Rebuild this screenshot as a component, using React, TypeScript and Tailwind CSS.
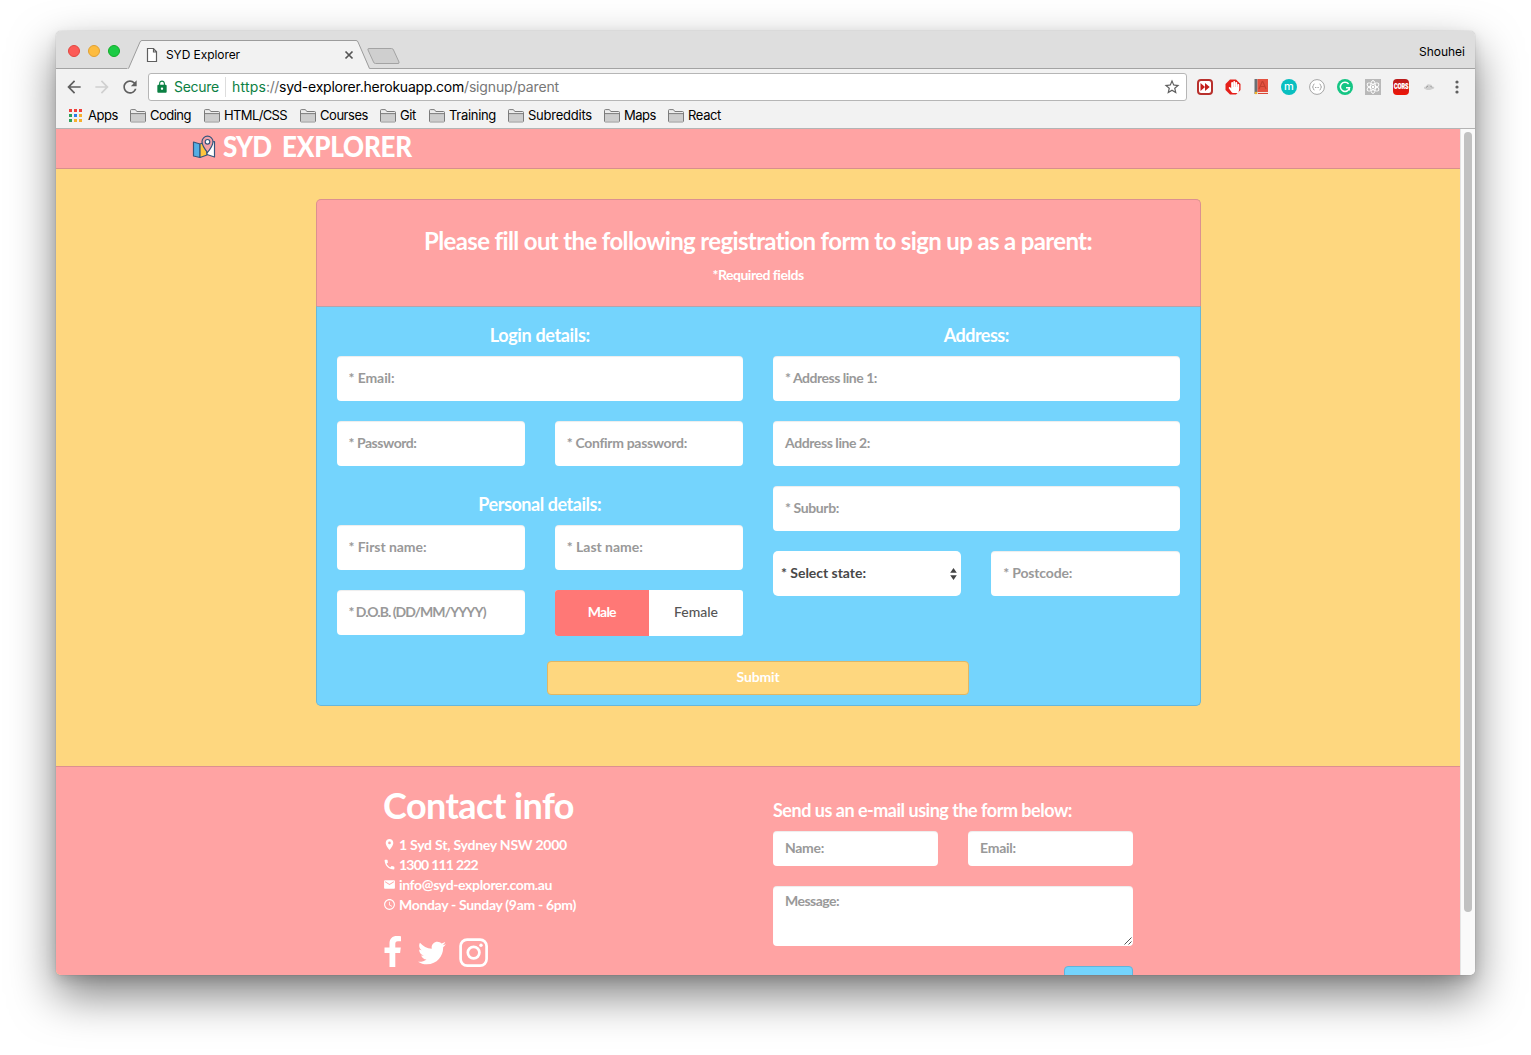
import React, { useLayoutEffect, useRef } from 'react';
import { FaTwitter, FaHandPaper } from 'react-icons/fa';
import { MdEmail, MdLocationOn, MdPhone, MdAccessTime, MdLock, MdArrowBack, MdArrowForward, MdRefresh, MdStarBorder } from 'react-icons/md';

/** Text tracked so that it spans a given number of pixels. */
function Fit({ w, children, className = '' }: { w: number; children: string; className?: string }) {
  const ref = useRef<HTMLSpanElement>(null);
  useLayoutEffect(() => {
    const el = ref.current;
    if (!el) return;
    el.style.letterSpacing = '0px';
    const natural = el.getBoundingClientRect().width;
    el.style.letterSpacing = `${(w - natural) / children.length}px`;
  }, [w, children]);
  return (
    <span ref={ref} className={`inline-block whitespace-pre ${className}`}>
      {children}
    </span>
  );
}

function Field({ label, w, className = 'h-[45px]' }: { label: string; w: number; className?: string }) {
  return (
    <div className={`flex min-w-0 items-center rounded bg-white px-3 pb-0.5 text-sm font-bold text-[#999] shadow-[inset_0_1px_1px_rgba(0,0,0,0.075)] ${className}`}>
      <Fit w={w}>{label}</Fit>
    </div>
  );
}

function Heading({ w, children }: { w: number; children: string }) {
  return (
    <h4 className="h-5 text-center text-lg leading-5 font-bold">
      <Fit w={w}>{children}</Fit>
    </h4>
  );
}

function Folder() {
  return (
    <svg width="16" height="14" viewBox="0 0 16 14" className="shrink-0">
      <path d="M.5 12V1.500q0-.9.9-.9h4l1.400 1.900h7.700q1 0 1 1V12q0 .9-.9.9H1.400q-.9 0-.9-.9Z" fill="#ececec" stroke="#7b7b7b" />
      <path d="M1 5.100h14V12.400H1Z" fill="#cdcdcd" />
      <path d="M.5 4.600h15" stroke="#7b7b7b" />
    </svg>
  );
}

const bookmarks: [string, number, string][] = [
  ['Coding', 41, 'w-[74px]'],
  ['HTML/CSS', 63, 'w-24'],
  ['Courses', 48, 'w-20'],
  ['Git', 16, 'w-[49px]'],
  ['Training', 47, 'w-[79px]'],
  ['Subreddits', 64, 'w-24'],
  ['Maps', 32, 'w-16'],
  ['React', 33, 'w-16'],
];

const appColours = ['bg-[#f0403a]', 'bg-[#f0403a]', 'bg-[#f0403a]', 'bg-[#2da05a]', 'bg-[#2b7de9]', 'bg-[#f6b02c]', 'bg-[#2da05a]', 'bg-[#f6b02c]', 'bg-[#f6b02c]'];

function TabStrip() {
  return (
    <div className="relative flex h-[38px] border-b border-[#a3a3a3] bg-[#dedede]">
      <div className="flex gap-2 pt-[14px] pl-3">
        <i className="size-3 rounded-full border border-[#e2463f] bg-[#fc5b57]" />
        <i className="size-3 rounded-full border border-[#e1a032] bg-[#fdbc40]" />
        <i className="size-3 rounded-full border border-[#12ac28] bg-[#1ccb45]" />
      </div>
      <div className="absolute top-[9px] left-[71px] h-[29px] w-[280px]">
        <svg width="280" height="29" viewBox="0 0 280 29" className="absolute inset-0">
          <path d="M0 28.500h1.500L13 2Q13.700.5 15 .5H229Q230.500.5 231 2L242 28.500H280V29H0Z" fill="#f2f2f2" />
          <path d="M1.500 28.500 13 2Q13.700.5 15 .5H229Q230.500.5 231 2L242.500 28.500" fill="none" stroke="#9c9c9c" />
          <path d="M242.800 28.500H280" stroke="#a3a3a3" />
          <path d="M242 8.500H264.500Q266 8.500 266.500 10L272 22Q272.500 23.500 271 23.500H248.500Q247 23.500 246.500 22L241 10Q240.400 8.500 242 8.500Z" fill="#cfcfcf" stroke="#a3a3a3" />
          <path d="M20.500 8.500H26.500L29.500 11.800V21.500H20.500ZM26.500 8.500V12H29.500" fill="#fff" stroke="#5f5f5f" strokeWidth="1.200" />
          <path d="m218.500 11.500 7 7m0-7-7 7" stroke="#555" strokeWidth="1.700" />
        </svg>
        <div className="relative flex h-full items-center pl-[39px] text-xs text-black">
          <Fit w={74}>SYD Explorer</Fit>
        </div>
      </div>
      <span className="mt-[13px] mr-[10px] ml-auto text-xs leading-4 text-black">
        <Fit w={46}>Shouhei</Fit>
      </span>
    </div>
  );
}

function Extensions() {
  return (
    <div className="ml-[10px] flex items-center gap-3">
      <svg width="16" height="16" viewBox="0 0 16 16">
        <rect x="1" y="1" width="14" height="14" rx="3" fill="#fff" stroke="#b8302c" strokeWidth="2" />
        <path d="M3.500 4 8 8l-4.500 4ZM8 4 12.700 8 8 12Z" fill="#c4201d" />
      </svg>
      <div className="relative size-4">
        <svg width="16" height="16" viewBox="0 0 16 16">
          <path d="M5 .5h6L15.500 5v6L11 15.500H5L.5 11V5Z" fill="#e5201b" />
        </svg>
        <FaHandPaper className="absolute top-[2px] left-[3px] size-[12px] text-white" />
      </div>
      <svg width="16" height="16" viewBox="0 0 16 16">
        <path d="M1.500 0h3v15h-3Z" fill="#6b7074" />
        <path d="M4.500 0H15v13H4.500Z" fill="#e4513f" />
        <path d="M4.500 13H15v2H3Z" fill="#f4e6df" />
        <path d="M6 10 9.200 2.500h.6L13 10M7.500 7.500h4" fill="none" stroke="#c4402f" strokeWidth="1.200" />
        <path d="M5 14.500h10" stroke="#d94636" />
        <circle cx="3" cy="14" r="1.300" fill="#f0b429" />
      </svg>
      <span className="flex size-4 items-center justify-center rounded-full bg-[#09bfc0] pb-px text-[11px] leading-none font-medium text-white">m</span>
      <svg width="16" height="16" viewBox="0 0 16 16" fill="none" stroke="#a5a5a5">
        <circle cx="8" cy="8" r="7.400" fill="#fff" />
        <path d="M5.500 5Q4.300 5 4.300 6.500T3.300 8Q4.300 8 4.300 9.500T5.500 11M10.500 5Q11.700 5 11.700 6.500T12.700 8Q11.700 8 11.700 9.500T10.500 11M6 8.500h1M7.600 8.500h1M9.200 8.500h.8" />
      </svg>
      <svg width="16" height="16" viewBox="0 0 16 16">
        <circle cx="8" cy="8" r="8" fill="#15c584" />
        <path d="M11.600 5A4.600 4.600 0 1 0 12.500 8.800H9M12.300 8.800v2.800" fill="none" stroke="#fff" strokeWidth="1.500" />
      </svg>
      <svg width="16" height="16" viewBox="0 0 16 16">
        <path d="M0 0h16v16H0Z" fill="#b9b9b9" />
        <g fill="none" stroke="#fff">
          <ellipse cx="8" cy="8" rx="6.500" ry="2.500" transform="rotate(30 8 8)" />
          <ellipse cx="8" cy="8" rx="6.500" ry="2.500" transform="rotate(90 8 8)" />
          <ellipse cx="8" cy="8" rx="6.500" ry="2.500" transform="rotate(150 8 8)" />
        </g>
        <circle cx="8" cy="8" r="1.300" fill="#fff" />
      </svg>
      <span className="flex size-4 items-center justify-center rounded-sm bg-linear-to-b from-[#b91c1c] to-[#ee1505] text-white">
        <span className="scale-y-140 text-[5.5px] leading-none font-black tracking-[-0.3px]">CORS</span>
      </span>
      <svg width="16" height="16" viewBox="0 0 16 16">
        <path d="M3 9.500Q2.500 7.500 5 7.500 6 4.500 8.500 5.500 11 5 11.200 7.500 14 7.500 13 9.500L9 11H6Z" fill="#cfcfcf" />
        <path d="M5 8.500 7 7M9.500 7l1.500 1.500" stroke="#999" />
      </svg>
      <svg width="16" height="16" viewBox="0 0 16 16" fill="#5f5f5f">
        <circle cx="8" cy="3" r="1.600" />
        <circle cx="8" cy="8" r="1.600" />
        <circle cx="8" cy="13" r="1.600" />
      </svg>
    </div>
  );
}

function Toolbar() {
  return (
    <div className="h-[60px] border-b border-[#b4b4b4] bg-[#f2f2f2] text-black">
      <div className="flex h-9 items-center pl-2">
        <MdArrowBack className="size-5 text-[#5f5f5f]" />
        <MdArrowForward className="ml-2 size-5 text-[#d0d0d0]" />
        <MdRefresh className="ml-2 size-5 text-[#5f5f5f]" />
        <div className="ml-2 flex h-7 w-[1039px] items-center rounded-[3px] border border-[#b6b6b6] bg-white text-sm">
          <MdLock className="ml-[6px] size-[14px] text-[#0b8043]" />
          <Fit w={45} className="ml-[5px] text-[#0b8043]">Secure</Fit>
          <i className="mr-[6px] ml-[6px] h-5 w-px bg-[#ddd]" />
          <Fit w={34} className="text-[#0b8043]">https</Fit>
          <Fit w={13} className="text-[#777]">{'://'}</Fit>
          <Fit w={185} className="text-black">syd-explorer.herokuapp.com</Fit>
          <Fit w={95} className="text-[#777]">/signup/parent</Fit>
          <MdStarBorder className="mr-[5px] ml-auto size-[18px] text-[#5f5f5f]" />
        </div>
        <Extensions />
      </div>
      <div className="flex h-[21px] items-center pl-[13px] text-[13px]">
        <div className="mr-[6px] grid grid-cols-3 gap-[2px]">
          {appColours.map((c, i) => (
            <i key={i} className={`size-[3px] ${c}`} />
          ))}
        </div>
        <span className="w-[42px]"><Fit w={30}>Apps</Fit></span>
        {bookmarks.map(([name, w, box]) => (
          <div key={name} className={`flex shrink-0 items-center gap-1 ${box}`}>
            <Folder />
            <Fit w={w}>{name}</Fit>
          </div>
        ))}
      </div>
    </div>
  );
}

function MapLogo() {
  return (
    <svg width="24" height="24" viewBox="0 0 24 24">
      <g stroke="#36557c" strokeWidth="1.200" strokeLinejoin="round">
        <path d="M1.500 7 8 9v13.500L1.500 21Z" fill="#55aee4" />
        <path d="m8 9 7-2.500V20l-7 2.500Z" fill="#ffc63e" />
        <path d="m15 8 7.500-1.500V22L15 19.500Z" fill="#fff" />
        <path d="M15.500 17.500Q10 10.500 10 6.700A5.500 5.500 0 0 1 21 6.700Q21 10.500 15.500 17.500Z" fill="#f3a1a7" />
        <circle cx="15.500" cy="6.800" r="2.300" fill="#fff" />
      </g>
    </svg>
  );
}

function RegistrationCard() {
  return (
    <section className="flex h-[507px] w-[885px] flex-col">
      <header className="h-[107px] shrink-0 rounded-t-[5px] border border-b-0 border-[#dc9090] bg-[#ffa3a3] pt-[26px] text-center">
        <h3 className="h-[30px] text-2xl leading-[30px] font-bold">
          <Fit w={668}>Please fill out the following registration form to sign up as a parent:</Fit>
        </h3>
        <p className="mt-[9px] h-5 text-sm leading-5 font-bold"><Fit w={91}>*Required fields</Fit></p>
      </header>
      <div className="flex-1 rounded-b-[5px] border border-t-[#b5a3ab] border-r-[#68b7d9] border-b-[#68b7d9] border-l-[#68b7d9] bg-[#74d4fd]">
        <div className="grid grid-cols-2 gap-x-[30px] px-5 pt-[18px]">
          <div>
            <Heading w={100}>Login details:</Heading>
            <Field className="mt-[11px] h-[45px]" label="* Email:" w={46} />
            <div className="mt-5 grid grid-cols-2 gap-[30px]">
              <Field label="* Password:" w={68} />
              <Field label="* Confirm password:" w={120} />
            </div>
            <div className="mt-[28px]"><Heading w={123}>Personal details:</Heading></div>
            <div className="mt-[11px] grid grid-cols-2 gap-[30px]">
              <Field label="* First name:" w={78} />
              <Field label="* Last name:" w={76} />
            </div>
            <div className="mt-5 grid grid-cols-2 gap-[30px]">
              <Field label="* D.O.B. (DD/MM/YYYY)" w={137} />
              <div className="flex h-[46px] overflow-hidden rounded-[3px] bg-white text-sm">
                <div className="flex w-1/2 items-center justify-center bg-[#ff7876] pb-0.5 font-bold"><Fit w={28}>Male</Fit></div>
                <div className="flex w-1/2 items-center justify-center pb-0.5 font-medium text-[#555]"><Fit w={44}>Female</Fit></div>
              </div>
            </div>
          </div>
          <div>
            <Heading w={65}>Address:</Heading>
            <Field className="mt-[11px] h-[45px]" label="* Address line 1:" w={92} />
            <Field className="mt-5 h-[45px]" label="Address line 2:" w={85} />
            <Field className="mt-5 h-[45px]" label="* Suburb:" w={54} />
            <div className="mt-5 grid grid-cols-2 gap-[30px]">
              <div className="flex h-[45px] items-center justify-between rounded-[5px] bg-white pr-1 pl-2 text-sm font-bold text-[#484848]">
                <Fit w={85} className="pb-0.5">* Select state:</Fit>
                <svg width="7" height="12" viewBox="0 0 7 12" fill="#444"><path d="M3.500 0 6.800 4.700H.2ZM3.500 12 .2 7.300H6.800Z" /></svg>
              </div>
              <Field label="* Postcode:" w={69} />
            </div>
          </div>
        </div>
        <button className="mx-auto mt-[25px] block h-[34px] w-[422px] rounded border border-[#dfb765] bg-[#fed77f] pb-0.5 text-sm font-bold text-white">
          <Fit w={43}>Submit</Fit>
        </button>
      </div>
    </section>
  );
}

function Footer() {
  const rows: [React.ReactNode, string, number][] = [
    [<MdLocationOn />, '1 Syd St, Sydney NSW 2000', 168],
    [<MdPhone />, '1300 111 222', 79],
    [<MdEmail />, 'info@syd-explorer.com.au', 153],
    [<MdAccessTime />, 'Monday - Sunday (9am - 6pm)', 177],
  ];
  return (
    <footer className="flex h-[209px] overflow-hidden border-t border-[#dc9090] bg-[#ffa3a3] pl-[328px]">
      <div className="w-[389px] pt-[18px]">
        <h2 className="h-10 text-4xl leading-10 font-bold"><Fit w={191} className="-ml-px">Contact info</Fit></h2>
        <div className="mt-[10px] text-sm leading-5 font-bold">
          {rows.map(([icon, text, w]) => (
            <p key={text} className="-ml-px flex h-5 items-center gap-[3px]">
              <span className="-mt-0.5 text-[13px]">{icon}</span>
              <Fit w={w}>{text}</Fit>
            </p>
          ))}
        </div>
        <div className="mt-5 flex items-center">
          <svg width="17" height="31" viewBox="0 0 17 31" fill="currentColor">
            <path d="M17 .3V5.200H14C11.800 5.200 11.300 6.300 11.300 8V11.500H16.800L16.100 17H11.300V31H5.500V17H.5V11.500H5.500V7.300C5.500 2.700 8.400 0 12.800 0 14.800 0 16.500.2 17 .3Z" />
          </svg>
          <FaTwitter className="mt-0.5 ml-[17px] size-7" />
          <svg width="30" height="30" viewBox="0 0 30 30" fill="none" stroke="currentColor" strokeWidth="2.700" className="mt-[3px] ml-[13px]">
            <rect x="1.600" y="1.600" width="26" height="26" rx="6.500" />
            <circle cx="14.600" cy="14.600" r="5.800" />
            <circle cx="22" cy="7.200" r="1.700" fill="currentColor" stroke="none" />
          </svg>
        </div>
      </div>
      <div className="w-[360px] pt-[33px]">
        <h4 className="h-[21px] text-lg leading-[21px] font-bold"><Fit w={299}>Send us an e-mail using the form below:</Fit></h4>
        <div className="mt-[10px] grid grid-cols-2 gap-[30px]">
          <Field label="Name:" w={39} className="h-[35px]" />
          <Field label="Email:" w={36} className="h-[35px]" />
        </div>
        <div className="relative mt-5 h-[60px] rounded bg-white px-3 pt-[5px] text-sm leading-5 font-bold text-[#999] shadow-[inset_0_1px_1px_rgba(0,0,0,0.075)]">
          <Fit w={54}>Message:</Fit>
          <svg width="8" height="8" viewBox="0 0 8 8" className="absolute right-px bottom-px"><path d="M.5 7.500 7.500.5M4.500 7.500l3-3" stroke="#555" /></svg>
        </div>
        <div className="mt-5 ml-auto h-[34px] w-[69px] rounded border border-[#61b4da] bg-[#74d4fd]" />
      </div>
    </footer>
  );
}

export default function App() {
  return (
    <div className="h-[1055px] w-[1531px] overflow-hidden bg-white pt-[31px] pl-14 font-['Inter','Liberation_Sans',sans-serif] text-white">
      <div className="h-[944px] w-[1419px] rounded-[5px] shadow-[0_0_1px_rgba(0,0,0,0.4),0_20px_45px_rgba(0,0,0,0.5),0_5px_12px_rgba(0,0,0,0.12)]">
        <div className="h-full overflow-hidden rounded-[5px]">
          <TabStrip />
          <Toolbar />
          <div className="flex h-[846px]">
            <div className="w-[1404px] bg-[#fed77f] font-['Lato','Open_Sans',sans-serif]">
              <header className="flex h-10 items-start border-b border-[#d98f8c] bg-[#ffa3a3] pl-[136px]">
                <span className="mt-[6px]"><MapLogo /></span>
                <span className="mt-0.5 ml-[7px] flex origin-bottom scale-y-112 gap-[11px] text-[26px] leading-[34px] font-black">
                  <Fit w={48}>SYD</Fit>
                  <Fit w={130}>EXPLORER</Fit>
                </span>
              </header>
              <main className="flex h-[597px] justify-center pt-[30px]"><RegistrationCard /></main>
              <Footer />
            </div>
            <div className="flex-1 border-l border-[#e4e4e4] bg-[#fafafa] pt-[3px] pl-[3px]">
              <div className="h-[780px] w-2 rounded-full bg-[#c1c1c1]" />
            </div>
          </div>
        </div>
      </div>
    </div>
  );
}
